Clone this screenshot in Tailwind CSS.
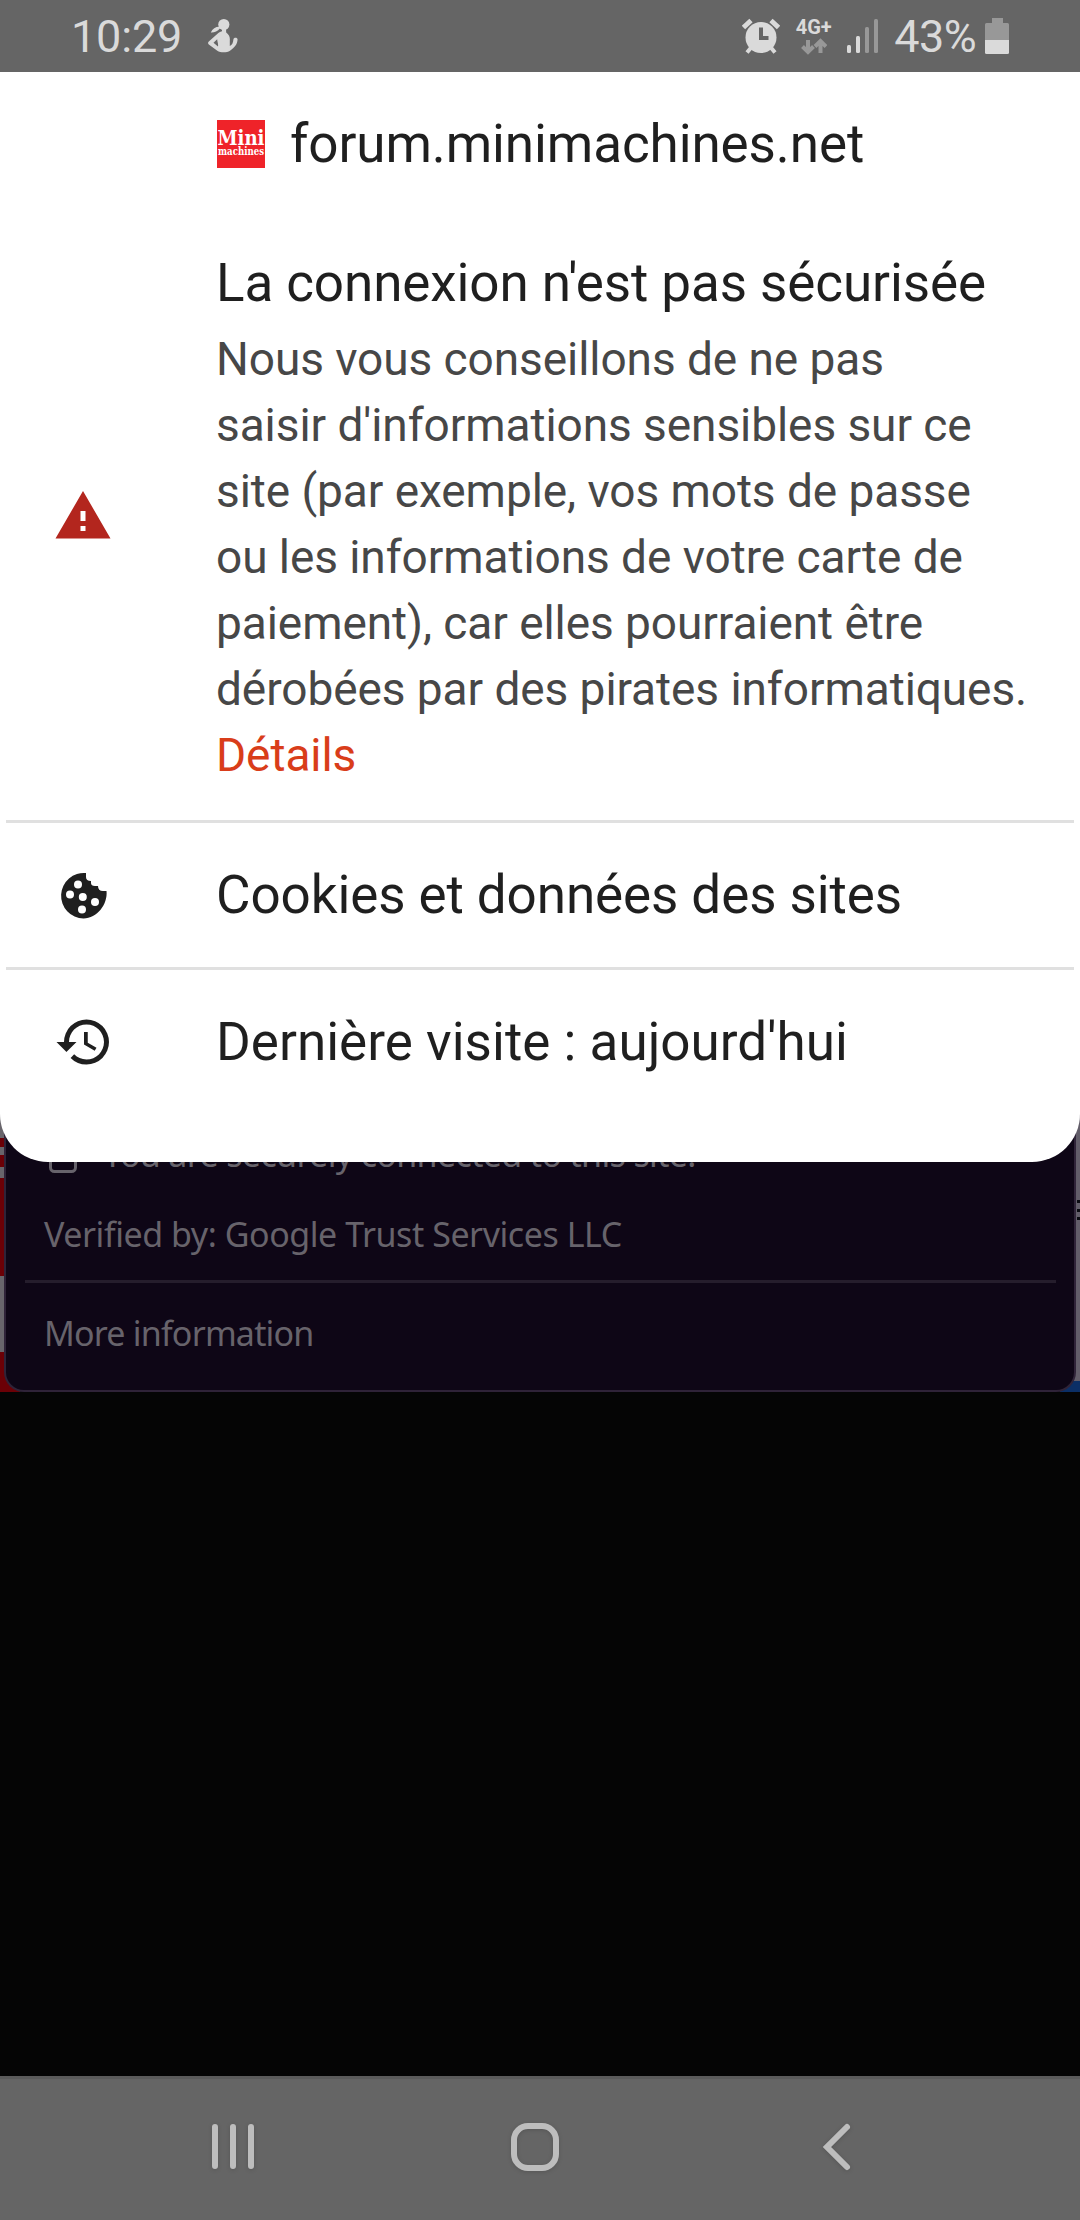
<!DOCTYPE html>
<html lang="fr">
<head>
    <meta charset="UTF-8">
    <meta name="viewport" content="width=device-width, initial-scale=1.0">
    <title>forum.minimachines.net</title>
    <script src="https://cdn.jsdelivr.net/npm/@tailwindcss/browser@4"></script>
</head>
<body class="bg-[#050505]">

    <div class="relative w-[1080px] h-[2220px] overflow-hidden flex flex-col bg-[#050505] font-['Roboto',sans-serif]">

        <!-- status bar -->
        <header class="h-[72px] shrink-0 bg-[#656565] text-[#dadada] flex items-center justify-between pl-[71px] pr-[71px]">
            <div class="flex items-center">
                <span class="w-[110px] text-[45px] leading-[72px] tracking-[-0.2px] pt-[1px]">10:29</span>
                <svg class="w-[30px] h-[36px] ml-[27px]" viewBox="0 0 30 36" fill="#dadada">
                    <circle cx="15.800" cy="6.500" r="5.600"/>
                    <path d="M12 8.800C8 8.500 4.500 10.500 2.800 14.500c3 .2 7-.8 9-4z"/>
                    <path d="M14 10.500h4l.2 4c2.800 2 4 4.500 3.600 8v5.500c2.300-1 3.300-3 3.600-6.500.1-2.500 4.200-2.500 4.200 0-.4 5-3 8-7.600 11.200-3.500 2.200-9.500 2-12.700 0L.8 26.500c-1-.8-1-2 0-3L9.500 15.800c1.500-1.500 3.700-2.200 4.500-2.500zM9.200 21.200l-3.700 3.600 4.500 3.600C10.500 26 9.200 23.500 9.200 21.200z" fill-rule="evenodd"/>
                </svg>
            </div>
            <div class="flex items-center">
                <svg class="w-[38px] h-[36px]" viewBox="0 0 38 36">
                    <path d="M1.500 9.500 9 2.500M29 2.500l7.500 7" stroke="#dadada" stroke-width="4.800"/>
                    <path d="m5 34.500 5-6M33 34.500l-5-6" stroke="#dadada" stroke-width="4"/>
                    <circle cx="19" cy="19.500" r="15.500" fill="#dadada"/>
                    <path d="M19 9.500V20h7.500" fill="none" stroke="#656565" stroke-width="4"/>
                </svg>
                <div class="ml-[15px] w-[37px] h-[40px] flex flex-col items-center pt-[1px]">
                    <span class="text-[20px] leading-[20px] font-bold whitespace-nowrap">4G+</span>
                    <svg class="w-[26px] h-[17px] mt-[1px] shrink-0" viewBox="0 0 26 17" fill="none" stroke="#989898" stroke-width="4">
                        <path d="M7 2v12M1.500 8.500 7 14l5.500-5.500M19.500 15V3M14 8.500l5.500-5.500L25 8.500"/>
                    </svg>
                </div>
                <svg class="w-[32px] h-[36px] ml-[14px]" viewBox="0 0 32 36">
                    <rect x="1" y="27" width="4" height="8" rx="1.500" fill="#dadada"/>
                    <rect x="10" y="18" width="4" height="17" rx="1.500" fill="#dadada"/>
                    <rect x="19" y="9" width="4" height="26" rx="1.500" fill="#989898"/>
                    <rect x="28" y="1" width="4" height="34" rx="1.500" fill="#989898"/>
                </svg>
                <span class="ml-[16px] text-[45px] leading-[72px] tracking-[-0.6px] pt-[1px]">43%</span>
                <svg class="w-[24px] h-[36px] ml-[9px]" viewBox="0 0 24 36">
                    <path d="M7 0h11v5h4.500q1.500 0 1.500 1.500V22H0V6.500Q0 5 1.500 5H7z" fill="#989898"/>
                    <path d="M0 22h24v12.500q0 1.500-1.500 1.500h-21Q0 36 0 34.500z" fill="#dadada"/>
                </svg>
            </div>
        </header>

        <!-- site info sheet -->
        <main class="relative z-10 h-[1090px] shrink-0 bg-white rounded-b-[48px] text-[#1f1f1f] text-[53px] tracking-[-0.1px]">
            <div class="h-[144px] flex items-center pl-[217px]">
                <svg class="size-[48px] overflow-visible font-['DejaVu_Serif',serif] font-bold tracking-normal" viewBox="0 0 48 48" fill="#fff">
                    <rect width="48" height="48" fill="#ef2329"/>
                    <text x="0.500" y="24.500" font-size="21" textLength="47" lengthAdjust="spacingAndGlyphs">Mini</text>
                    <text x="1" y="34.500" font-size="11" textLength="46" lengthAdjust="spacingAndGlyphs">machines</text>
                </svg>
                <span class="ml-[25px] leading-[64px]">forum.minimachines.net</span>
            </div>

            <section class="h-[604px] flex items-center">
                <div class="w-[216px] shrink-0 pl-[53px] -mt-[5px]">
                    <svg class="w-[60px] h-[60px]" viewBox="0 0 24 24" fill="#b3261e">
                        <path d="M1 21h22L12 2zm12-3h-2v-2h2zm0-4h-2v-4h2z"/>
                    </svg>
                </div>
                <div class="h-[540px] whitespace-nowrap">
                    <h1 class="leading-[64px] mt-[3px]">La connexion n'est pas sécurisée</h1>
                    <p class="mt-[11px] text-[46px] leading-[66px] tracking-[-0.07px] text-[#474747]">
                        Nous vous conseillons de ne pas<br>
                        saisir d'informations sensibles sur ce<br>
                        site (par exemple, vos mots de passe<br>
                        ou les informations de votre carte de<br>
                        paiement), car elles pourraient être<br>
                        dérobées par des pirates informatiques.<br>
                        <a class="text-[#d93d1a]">Détails</a>
                    </p>
                </div>
            </section>

            <div class="mx-[6px] h-[147px] border-t-[3px] border-[#e0e0e0] flex items-center">
                <div class="w-[210px] pl-[52px]">
                    <svg class="w-[51px] h-[51px]" viewBox="0 0 51 51">
                        <path d="M28 3v4q0 4 5 4v2q0 3 4 3h3q0 5 5 5h3.500C50 34 39 48.500 25.500 48.500A22.800 22.800 0 1 1 28 3z" fill="#1f1f1f"/>
                        <g fill="#fff">
                            <circle cx="20" cy="14.500" r="4"/>
                            <circle cx="12" cy="24.500" r="4"/>
                            <circle cx="24.800" cy="27" r="4"/>
                            <circle cx="37" cy="32" r="4"/>
                            <circle cx="24" cy="39.500" r="4"/>
                        </g>
                    </svg>
                </div>
                <span class="leading-[64px]">Cookies et données des sites</span>
            </div>
            <div class="mx-[6px] h-[147px] border-t-[3px] border-[#e0e0e0] flex items-center">
                <div class="w-[210px] pl-[48px]">
                    <svg class="w-[60px] h-[60px]" viewBox="0 0 24 24" fill="#1f1f1f">
                        <path d="M13 3a9 9 0 0 0-9 9H1l3.890 3.890.07.14L9 12H6c0-3.870 3.130-7 7-7s7 3.130 7 7-3.130 7-7 7c-1.930 0-3.680-.79-4.940-2.060l-1.420 1.420A8.954 8.954 0 0 0 13 21a9 9 0 0 0 0-18zm-1 5v5l4.280 2.540.72-1.210-3.500-2.080V8z"/>
                    </svg>
                </div>
                <span class="leading-[64px] tracking-[0.02px]">Dernière visite : aujourd'hui</span>
            </div>
        </main>

        <!-- dimmed page behind the sheet -->
        <section class="relative -mt-[62px] h-[292px] shrink-0 overflow-hidden flex justify-between">
            <div class="w-[20px] flex flex-col bg-[#6b0006]">
                <div class="h-[38px] bg-[#68656b]"></div>
                <div class="h-[9px] bg-[#6b0006]"></div>
                <div class="h-[8px] bg-[#68656b]"></div>
                <div class="h-[12px] bg-[#6b0006]"></div>
                <div class="h-[11px] bg-[#68656b]"></div>
                <div class="h-[98px] bg-[#6b0006]"></div>
                <div class="h-[76px] bg-[#68656b]"></div>
            </div>
            <div class="w-[20px] flex flex-col items-end bg-[#625d69]">
                <div class="h-[100px]"></div>
                <div class="h-[20px] w-[3px] border-y-[3px] border-[#0b0b12] flex items-center"><div class="w-full h-[3px] bg-[#0b0b12]"></div></div>
                <div class="h-[161px]"></div>
                <div class="h-[11px] w-full bg-[#0b2f66]"></div>
            </div>
            <div class="absolute inset-x-[4px] top-0 bottom-0 bg-[#0e0616] border-2 border-t-0 border-[#2f2338] rounded-b-[20px] text-[#67636b] text-[34px] font-['Noto_Sans',sans-serif] whitespace-nowrap">
                <div class="h-[91px] flex items-end pl-[43px] pb-[18px]">
                    <svg class="w-[28px] h-[40px]" viewBox="0 0 28 40" fill="none" stroke="#67636b" stroke-width="3">
                        <path d="M7 16V9a7 7 0 0 1 14 0v7"/>
                        <rect x="1.500" y="16" width="25" height="22.500" rx="4"/>
                    </svg>
                    <span class="ml-[26px] -mb-[5px] leading-[48px] tracking-[-0.65px]">You are securely connected to this site.</span>
                </div>
                <p class="h-[89px] pl-[38px] pt-[19px] leading-[48px] tracking-[-0.45px]">Verified by: Google Trust Services LLC</p>
                <div class="ml-[19px] mr-[18px] h-[3px] bg-[#251d2c]"></div>
                <p class="pl-[38px] pt-[26px] leading-[48px] tracking-[-0.8px]">More information</p>
            </div>
        </section>

        <div class="grow"></div>

        <!-- navigation bar -->
        <nav class="h-[144px] shrink-0 bg-[#656565] border-t-[3px] border-[#5b5b5b] flex items-center pl-[209px] pb-[5px]">
            <svg class="w-[48px] h-[54px] drop-shadow-sm" viewBox="0 0 48 54" stroke="#bdbdbd" stroke-width="6" stroke-linecap="round">
                <path d="M6 7v39M24 7v39M42 7v39"/>
            </svg>
            <svg class="ml-[251px] w-[54px] h-[54px] drop-shadow-sm" viewBox="0 0 54 54" fill="none" stroke="#bdbdbd" stroke-width="6">
                <rect x="6" y="6" width="42" height="42" rx="14"/>
            </svg>
            <svg class="ml-[256px] w-[36px] h-[54px] drop-shadow-sm" viewBox="0 0 36 54" fill="none" stroke="#bdbdbd" stroke-width="6" stroke-linecap="round">
                <path d="M29 7 9 27l20 20"/>
            </svg>
        </nav>
    </div>

</body>
</html>
